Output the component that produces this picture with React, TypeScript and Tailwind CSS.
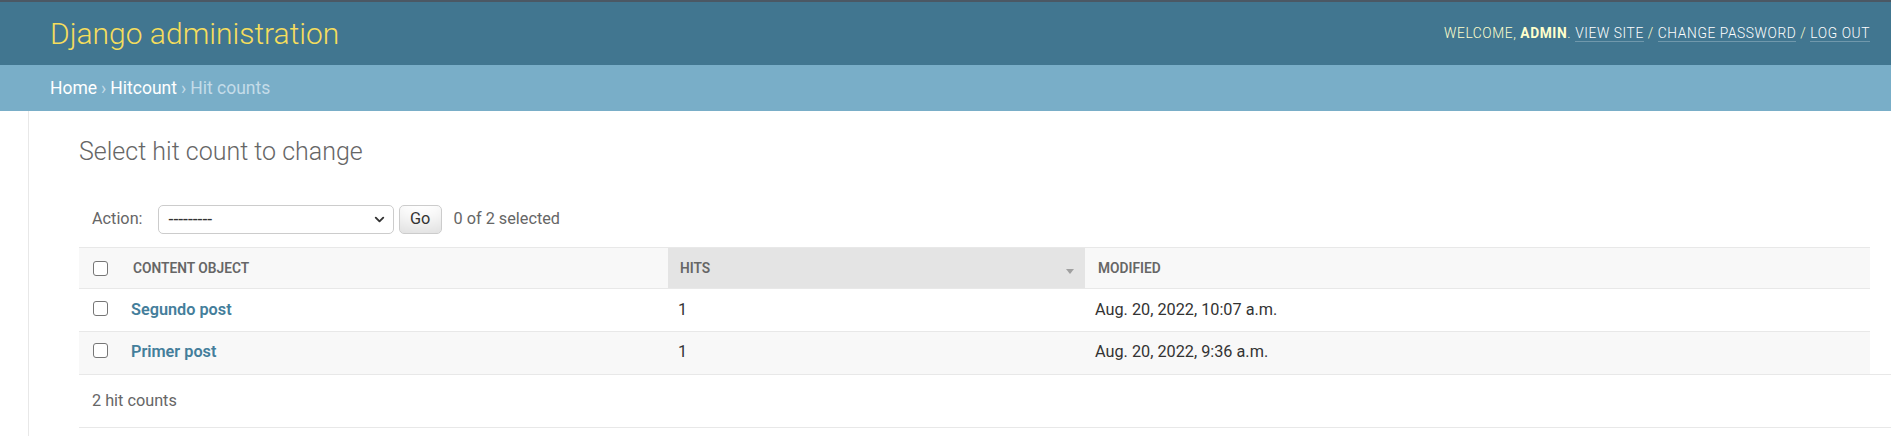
import { ChevronDown } from "lucide-react";

const ROWS = [
  { name: "Segundo post", hits: 1, modified: "Aug. 20, 2022, 10:07 a.m." },
  { name: "Primer post", hits: 1, modified: "Aug. 20, 2022, 9:36 a.m." },
];

function Box() {
  return (
    <input
      type="checkbox"
      className="m-0 block h-[15px] w-[15px] appearance-none rounded-[3px] border-[1.5px] border-[#767676] bg-white"
    />
  );
}

export default function App() {
  return (
    <div className="flex min-h-screen flex-col bg-white text-[#333] [font-family:Roboto,'Liberation_Sans',sans-serif]">
      {/* Header */}
      <header className="flex h-[65px] items-center justify-between border-t-2 border-[#4b5864] bg-[#417690] pl-[50px] pr-[21px]">
        <h1 className="text-[30px] font-light leading-none text-[#f5dd5d]">Django administration</h1>
        <div className="text-[13.75px] font-light uppercase tracking-[0.6px] text-[#ffc]">
          Welcome, <strong className="font-bold text-[#ffc]">admin</strong>.{" "}
          <a className="border-b border-white/25 text-[#fff]">View site</a> /{" "}
          <a className="border-b border-white/25 text-[#fff]">Change password</a> /{" "}
          <a className="border-b border-white/25 text-[#fff]">Log out</a>
        </div>
      </header>

      {/* Breadcrumbs */}
      <div className="flex h-[46px] items-center bg-[#79aec8] px-[50px] pt-[1px] text-[17.5px] text-[#c4dce8]">
        <a className="text-white">Home</a>
        <span className="px-[4px]">›</span>
        <a className="text-white">Hitcount</a>
        <span className="px-[4px]">›</span>
        <span>Hit counts</span>
      </div>

      <div className="flex flex-1">
        {/* collapsed nav sidebar toggle */}
        <div className="w-[29px] shrink-0 border-r border-[#e8e8e8]" />

        <main className="flex-1 pl-[50px] pt-[26px]">
          <h1 className="mb-[26px] text-[25px] font-light leading-[30px] text-[#666]">
            Select hit count to change
          </h1>

          {/* Actions */}
          <div className="flex items-center pb-[13px] pl-[13px] pt-[12px] text-[16.25px] text-[#666]">
            <span>Action:</span>
            <div className="ml-[15px] flex h-[29px] w-[236px] items-center justify-between rounded-[5px] border border-[#ccc] bg-white pl-[10px] pr-[6px] text-[17.5px] text-[#333]">
              <span className="leading-none">---------</span>
              <ChevronDown size={15} strokeWidth={3} className="text-[#333]" />
            </div>
            <button className="ml-[5px] h-[29px] w-[43px] rounded-[5px] border border-[#ccc] bg-white text-[16.25px] text-[#333] shadow-[inset_0_-19px_25px_-12px_rgba(0,0,0,0.15)]">
              Go
            </button>
            <span className="ml-[12px]">0 of 2 selected</span>
          </div>

          {/* Results */}
          <div className="mr-[21px]">
            <table className="w-full table-fixed border-collapse">
              <colgroup>
                <col className="w-[42px]" />
                <col className="w-[547px]" />
                <col className="w-[417px]" />
                <col />
              </colgroup>
              <thead>
                <tr className="border-y border-[#e8e8e8] bg-[#f8f8f8] text-left text-[13.75px] font-semibold uppercase text-[#666]">
                  <th className="h-[41px] p-0">
                    <div className="flex justify-center">
                      <Box />
                    </div>
                  </th>
                  <th className="p-0 px-[12px] font-semibold">Content object</th>
                  <th className="bg-[#e4e4e4] p-0 font-semibold">
                    <div className="flex items-center justify-between pl-[12px] pr-[11px]">
                      <span>Hits</span>
                      <svg width="8" height="5" viewBox="0 0 8 5" className="mt-[6px]">
                        <polygon points="0,0 8,0 4,5" fill="#a0a0a0" />
                      </svg>
                    </div>
                  </th>
                  <th className="p-0 px-[13px] font-semibold">Modified</th>
                </tr>
              </thead>
              <tbody className="text-[16.25px] leading-[20px]">
                {ROWS.map((r, i) => (
                  <tr
                    key={r.name}
                    className={i % 2 === 1 ? "bg-[#f8f8f8]" : "border-b border-[#e8e8e8] bg-white"}
                  >
                    <td className="h-[42.5px] px-0 pt-[11.5px] align-top">
                      <div className="flex justify-center">
                        <Box />
                      </div>
                    </td>
                    <th className="px-[10px] py-[10.5px] text-left align-top font-semibold text-[#447e9b]">
                      <a>{r.name}</a>
                    </th>
                    <td className="px-[10px] py-[10.5px] align-top">{r.hits}</td>
                    <td className="px-[10px] py-[10.5px] align-top">{r.modified}</td>
                  </tr>
                ))}
              </tbody>
            </table>
          </div>

          {/* Paginator */}
          <div className="border-y border-[#e8e8e8] py-[12.5px] pl-[13px] text-[16.25px] leading-[27px] text-[#666]">
            2 hit counts
          </div>
        </main>
      </div>
    </div>
  );
}
